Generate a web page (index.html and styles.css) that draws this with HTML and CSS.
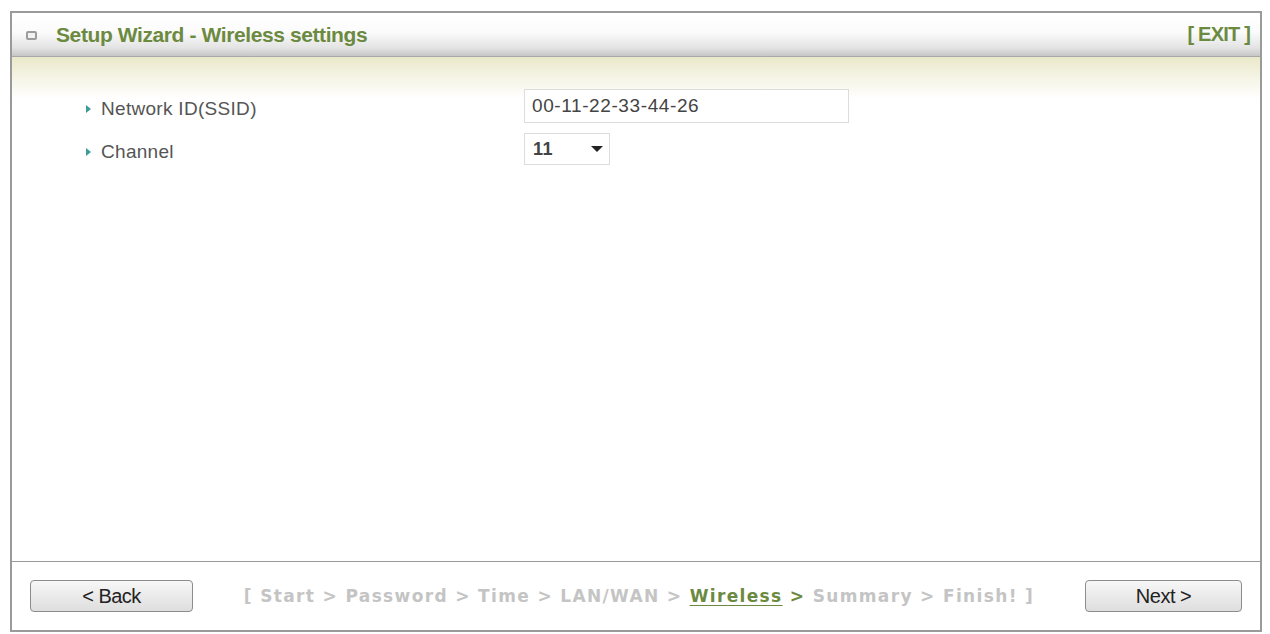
FILE: index.html
```html
<!DOCTYPE html>
<html lang="en">
<head>
    <meta charset="UTF-8">
    <title>Setup Wizard - Wireless settings</title>
    <link rel="stylesheet" href="styles.css">
</head>
<body>
    <div class="wizard">
        <div class="wizard-header">
            <span class="header-icon"></span>
            <h1>Setup Wizard - Wireless settings</h1>
            <a class="exit" href="#">[ EXIT ]</a>
        </div>

        <div class="wizard-body">
            <div class="form-row">
                <span class="label">Network ID(SSID)</span>
                <input class="text-field" type="text" value="00-11-22-33-44-26">
            </div>
            <div class="form-row">
                <span class="label">Channel</span>
                <div class="select-box">
                    <span>11</span>
                    <span class="caret"></span>
                </div>
            </div>
        </div>

        <div class="wizard-footer">
            <button class="btn">&lt; Back</button>
            <div class="steps">
                [ Start &gt; Password &gt; Time &gt; LAN/WAN &gt; <span class="current">Wireless</span> <span class="current-arrow">&gt;</span> Summary &gt; Finish! ]
            </div>
            <button class="btn">Next &gt;</button>
        </div>
    </div>
</body>
</html>
```

FILE: styles.css
```css
body {
    margin: 0;
    padding: 11px 0 0 10px;
    background-color: #fff;
    font-family: "Liberation Sans", Arial, sans-serif;
}

.wizard {
    box-sizing: border-box;
    width: 1252px;
    height: 621px;
    border: 2px solid #9a9a9a;
    display: flex;
    flex-direction: column;
}

/* title bar */
.wizard-header {
    height: 43px;
    display: flex;
    align-items: center;
    padding: 0 10px 0 14px;
    background: linear-gradient(to bottom, #ffffff 0%, #fbfbfb 45%, #e4e4e4 80%, #c6c6c6 100%);
    border-bottom: 1px solid #a8a8a8;
}

.header-icon {
    box-sizing: border-box;
    width: 11px;
    height: 9px;
    border: 2px solid #9c9c9c;
    border-radius: 2px;
    background-color: #f2f2f2;
    margin-right: 19px;
    margin-top: 2px;
}

.wizard-header h1 {
    margin: 0;
    flex-grow: 1;
    font-size: 21px;
    font-weight: bold;
    letter-spacing: -0.4px;
    color: #6c8a3f;
}

.exit {
    font-size: 20px;
    font-weight: bold;
    letter-spacing: -0.8px;
    color: #6c8a3f;
    text-decoration: none;
}

/* form area */
.wizard-body {
    flex-grow: 1;
    padding: 32px 0 0 74px;
    background: linear-gradient(to bottom, #eae8c9 0px, #f4f3e2 18px, #ffffff 42px);
}

.form-row {
    display: flex;
    align-items: center;
    margin-bottom: 10px;
}

.label {
    width: 438px;
    display: flex;
    align-items: center;
    padding-top: 5px;
    font-size: 19px;
    letter-spacing: 0.3px;
    color: #555;
}

.label::before {
    content: "";
    border-left: 5px solid #3e9c98;
    border-top: 4px solid transparent;
    border-bottom: 4px solid transparent;
    margin-right: 10px;
}

.text-field {
    box-sizing: border-box;
    width: 325px;
    height: 34px;
    padding: 0 7px;
    border: 1px solid #dcdcdc;
    font-family: "Liberation Sans", Arial, sans-serif;
    font-size: 19px;
    letter-spacing: 0.6px;
    color: #444;
    outline: none;
}

.select-box {
    box-sizing: border-box;
    width: 86px;
    height: 32px;
    padding: 0 4px 0 8px;
    border: 1px solid #dcdcdc;
    display: flex;
    align-items: center;
    justify-content: space-between;
    font-size: 18px;
    font-weight: bold;
    letter-spacing: 0.5px;
    color: #444;
}

.caret {
    border-top: 6px solid #222;
    border-left: 6px solid transparent;
    border-right: 6px solid transparent;
    margin-right: 2px;
}

/* step bar */
.wizard-footer {
    height: 68px;
    border-top: 1px solid #9a9a9a;
    display: flex;
    align-items: center;
    justify-content: space-between;
    padding: 0 18px;
}

.btn {
    width: 163px;
    height: 32px;
    border: 1px solid #8c8c8c;
    border-radius: 4px;
    background: linear-gradient(to bottom, #f7f7f7, #dedede);
    font-family: "Liberation Sans", Arial, sans-serif;
    font-size: 20px;
    letter-spacing: -0.5px;
    color: #222;
    cursor: pointer;
}

.btn:last-child {
    width: 157px;
}

.steps {
    font-family: "DejaVu Sans", Verdana, sans-serif;
    font-size: 17px;
    font-weight: bold;
    letter-spacing: 1.35px;
    color: #c4c4c4;
}

.steps .current {
    color: #6c8a3f;
    text-decoration: underline;
    text-underline-offset: 3px;
}

.steps .current-arrow {
    color: #6c8a3f;
}
```
